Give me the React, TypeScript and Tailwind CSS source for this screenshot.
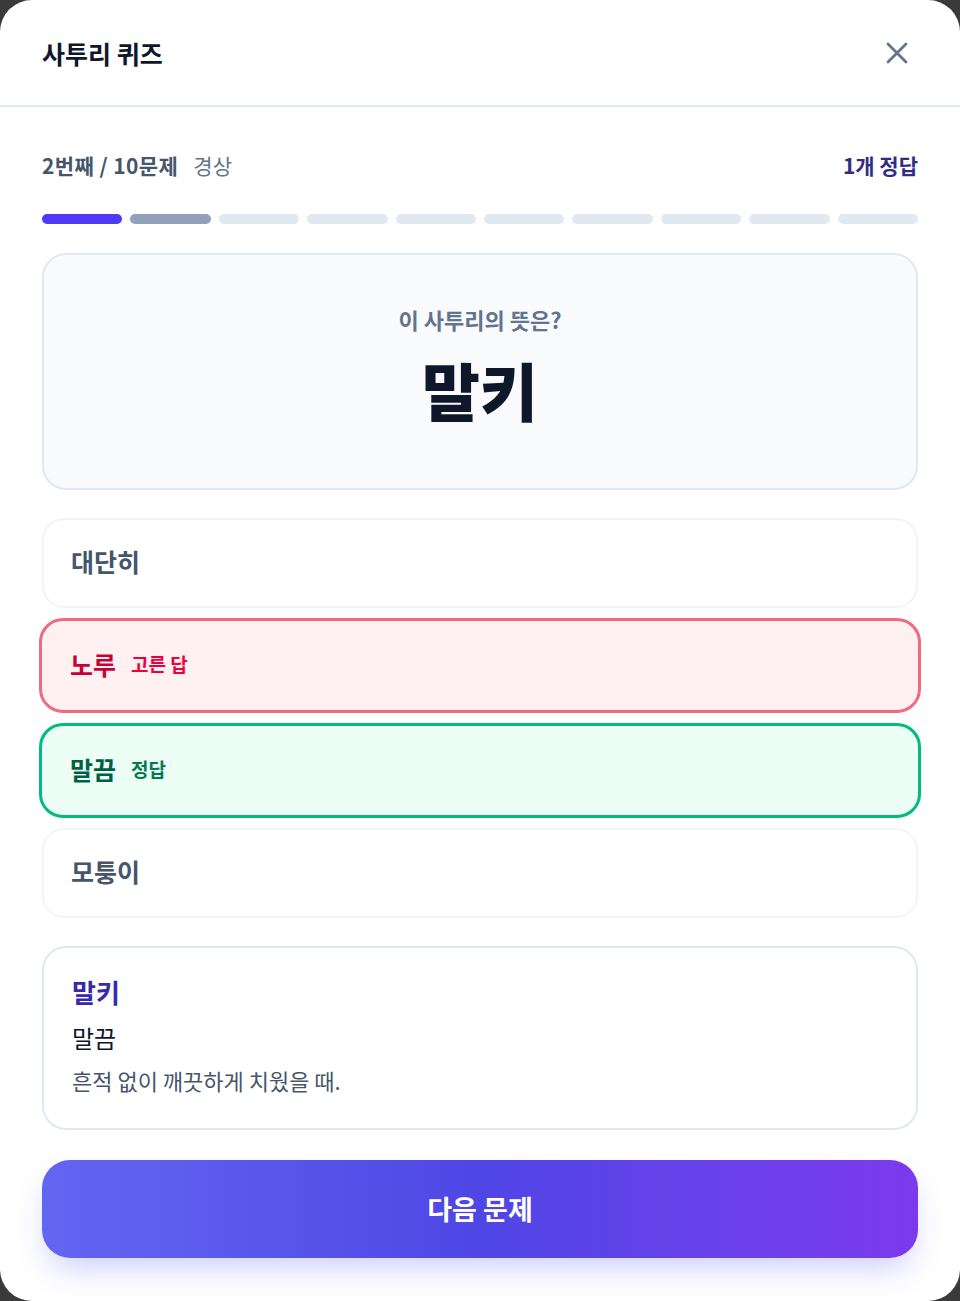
import React from 'react';

const FONT = { fontFamily: '"Noto Sans CJK KR", "Noto Sans", sans-serif' };

const QuizModal = () => {
  const total = 10;
  const current = 2;

  return (
    <div className="min-h-[1301px] bg-[#3a3a3a]" style={FONT}>
      <div className="h-[1301px] w-[960px] rounded-[32px] bg-white flex flex-col">
        {/* Header */}
        <div className="h-[107px] shrink-0 flex items-center justify-between pl-[42px] pr-[52px] border-b-2 border-slate-200">
          <h1 className="text-[25px] leading-8 font-bold text-slate-900">사투리 퀴즈</h1>
          <button className="text-slate-500">
            <svg width="22" height="22" viewBox="0 0 22 22" fill="none" stroke="currentColor" strokeWidth="2.8" strokeLinecap="round">
              <path d="M2 2 L20 20 M20 2 L2 20" />
            </svg>
          </button>
        </div>

        <div className="px-[42px] pt-[45px]">
          {/* Progress */}
          <div className="flex items-center justify-between h-7">
            <div className="flex items-center gap-[15px]">
              <span className="text-[21px] font-bold text-slate-600 tracking-[0.02em]">2번째 / 10문제</span>
              <span className="text-[21px] text-slate-500">경상</span>
            </div>
            <span className="text-[21px] font-bold text-indigo-900">1개 정답</span>
          </div>
          <div className="mt-[34px] flex gap-2">
            {Array.from({ length: total }).map((_, i) => (
              <div
                key={i}
                className={`h-[10px] flex-1 rounded-full ${
                  i < current - 1 ? 'bg-indigo-600' : i === current - 1 ? 'bg-slate-400' : 'bg-slate-200'
                }`}
              />
            ))}
          </div>

          {/* Question */}
          <div className="mt-[29px] h-[237px] rounded-[24px] border-2 border-slate-200 bg-slate-50 flex flex-col items-center justify-center">
            <p className="text-[22px] leading-7 font-bold text-slate-500 -mt-[14px]">이 사투리의 뜻은?</p>
            <p className="mt-[20px] text-[63px] leading-[72px] font-black text-slate-900">말키</p>
          </div>

          {/* Options */}
          <div className="mt-[28px] flex flex-col gap-[10px]">
            <div className="h-[90px] rounded-[22px] border-2 border-slate-100 bg-white flex items-center px-[27px] pb-[3px]">
              <span className="text-[25px] font-bold text-slate-600">대단히</span>
            </div>
            <div className="-mx-[3px] h-[95px] rounded-[24px] border-[3px] border-[#ef6b7d] bg-rose-50 flex items-center gap-[15px] px-[28px] pb-[2px]">
              <span className="text-[25px] font-bold text-rose-700">노루</span>
              <span className="text-[19px] font-bold text-rose-600">고른 답</span>
            </div>
            <div className="-mx-[3px] h-[95px] rounded-[24px] border-[3px] border-emerald-500 bg-emerald-50 flex items-center gap-[15px] px-[28px] pb-[2px]">
              <span className="text-[25px] font-bold text-emerald-800">말끔</span>
              <span className="text-[19px] font-bold text-emerald-700">정답</span>
            </div>
            <div className="h-[90px] rounded-[22px] border-2 border-slate-100 bg-white flex items-center px-[27px] pb-[3px]">
              <span className="text-[25px] font-bold text-slate-600">모퉁이</span>
            </div>
          </div>

          {/* Explanation */}
          <div className="mt-[28px] h-[184px] rounded-[24px] border-2 border-slate-200 bg-white px-[28px] pt-[28px]">
            <p className="text-[26px] leading-8 font-bold text-indigo-800">말키</p>
            <p className="mt-[14px] text-[24px] leading-8 text-slate-900">말끔</p>
            <p className="mt-[10px] text-[22px] leading-8 text-slate-600">흔적 없이 깨끗하게 치웠을 때.</p>
          </div>

          {/* Next */}
          <button className="mt-[30px] w-full h-[98px] rounded-[28px] bg-linear-to-r from-[#6366f1] via-[#4f46e5] to-[#7c3aed] shadow-[0_16px_32px_-8px_rgba(99,102,241,0.35)] text-white text-[27px] font-bold">
            다음 문제
          </button>
        </div>
      </div>
    </div>
  );
};

export default function App() {
  return <QuizModal />;
}
